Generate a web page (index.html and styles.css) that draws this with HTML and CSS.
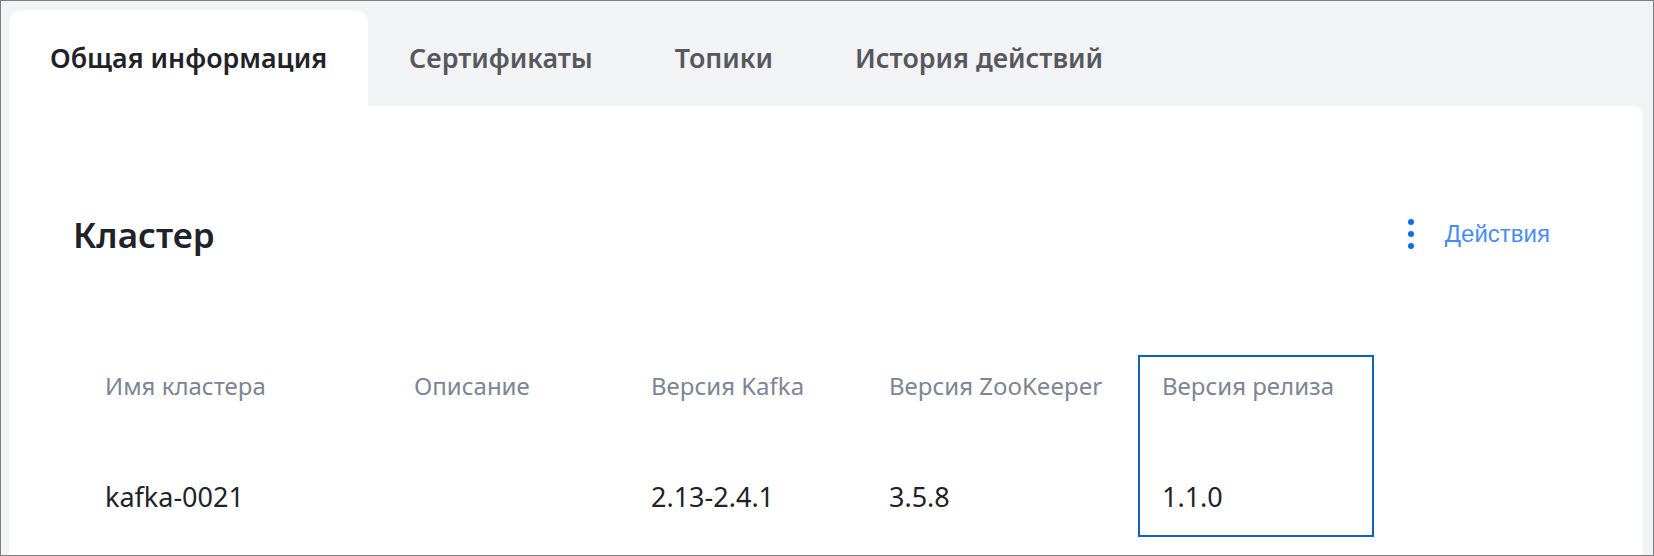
FILE: index.html
```html
<!DOCTYPE html>
<html lang="ru">
<head>
<meta charset="utf-8">
<title>Кластер</title>
<link rel="stylesheet" href="styles.css">
</head>
<body>
<div class="frame">
  <nav class="tabs">
    <div class="tab tab-active">Общая информация</div>
    <div class="tab">Сертификаты</div>
    <div class="tab">Топики</div>
    <div class="tab">История действий</div>
  </nav>
  <section class="panel">
    <header class="panel-head">
      <h1 class="title">Кластер</h1>
      <button class="actions" type="button">
        <span class="kebab"><i></i><i></i><i></i></span>
        <span class="actions-label">Действия</span>
      </button>
    </header>
    <div class="props">
      <div class="prop prop-name">
        <div class="prop-label">Имя кластера</div>
        <div class="prop-value">kafka-0021</div>
      </div>
      <div class="prop prop-desc">
        <div class="prop-label">Описание</div>
        <div class="prop-value"></div>
      </div>
      <div class="prop prop-kafka">
        <div class="prop-label">Версия Kafka</div>
        <div class="prop-value">2.13-2.4.1</div>
      </div>
      <div class="prop prop-zk">
        <div class="prop-label">Версия ZooKeeper</div>
        <div class="prop-value">3.5.8</div>
      </div>
      <div class="prop prop-release prop-focus">
        <div class="prop-label">Версия релиза</div>
        <div class="prop-value">1.1.0</div>
      </div>
    </div>
  </section>
</div>
</body>
</html>
```

FILE: styles.css
```css
* { box-sizing: border-box; }
html, body { margin: 0; padding: 0; }
body {
  font-family: "Noto Sans", "Open Sans", sans-serif;
  background: #ffffff;
}
.frame {
  width: 1654px;
  height: 556px;
  border: 1px solid #7d7d7d;
  background: #f2f3f5;
  padding: 9px 10px 0 8px;
  display: flex;
  flex-direction: column;
  overflow: hidden;
}
.tabs {
  display: flex;
  height: 96px;
  flex: none;
}
.tab {
  display: flex;
  align-items: center;
  padding: 0 41px 2px 41px;
  font-size: 26.8px;
  font-weight: 600;
  color: #56585d;
  white-space: nowrap;
}
.tab-active {
  background: #ffffff;
  color: #1f2329;
  border-radius: 13px 13px 0 0;
}
.panel {
  flex: 1;
  background: #ffffff;
  border-radius: 0 9px 0 0;
  padding: 1px 93px 0 0;
}
.panel-head {
  display: flex;
  align-items: center;
  justify-content: space-between;
  height: 254px;
  padding: 0 0 0 64px;
}
.title {
  margin: 0;
  font-size: 35px;
  font-weight: 600;
  color: #1f2329;
}
.actions {
  display: flex;
  align-items: center;
  gap: 31px;
  border: 0;
  background: none;
  padding: 0;
  cursor: pointer;
}
.kebab {
  display: flex;
  flex-direction: column;
  gap: 6px;
}
.kebab i {
  display: block;
  width: 6px;
  height: 6px;
  border-radius: 50%;
  background: #0b6cf5;
}
.actions-label {
  font-family: "Liberation Sans", Arial, sans-serif;
  font-size: 24px;
  color: #4a8cf6;
}
.props {
  display: grid;
  grid-template-columns: 309px 237px 238px 273px 236px;
  margin-left: 72px;
  margin-top: -6px;
}
.prop {
  border: 2px solid transparent;
  padding: 13px 22px 21px 22px;
}
.prop-focus {
  border-color: #0f61c2;
}
.prop-label {
  font-size: 24px;
  line-height: 32px;
  color: #7d8594;
  white-space: nowrap;
}
.prop-value {
  margin-top: 78px;
  font-size: 27px;
  line-height: 34px;
  height: 34px;
  color: #1f2329;
  white-space: nowrap;
}
```
